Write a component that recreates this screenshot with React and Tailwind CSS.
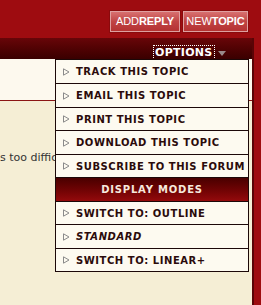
const items = [
  { t: "TRACK THIS TOPIC", h: "h-[24px]" },
  { t: "EMAIL THIS TOPIC", h: "h-[24px]" },
  { t: "PRINT THIS TOPIC", h: "h-[23px]" },
  { t: "DOWNLOAD THIS TOPIC", h: "h-[24px]" },
  { t: "SUBSCRIBE TO THIS FORUM", h: "h-[23px]" },
  { t: "DISPLAY MODES", h: "h-[24px]", header: true },
  { t: "SWITCH TO: OUTLINE", h: "h-[23px]" },
  { t: "STANDARD", h: "h-[24px]", italic: true },
  { t: "SWITCH TO: LINEAR+", h: "h-[23px]" },
];

function Btn({ a, b, w }) {
  return (
    <div
      className={`${w} h-[21px] flex items-center justify-center border border-[#dfa0a0] bg-gradient-to-b from-[#d87070] via-[#c04444] to-[#b53232] text-white text-[11px] tracking-[-0.1px] font-['Liberation_Sans',Arial,sans-serif] shadow-[0_0_0_1px_#8a0a0c]`}
    >
      <span>{a}</span>
      <span className="font-bold">{b}</span>
    </div>
  );
}

function Tri() {
  return (
    <svg width="7" height="8" viewBox="0 0 7 8" className="shrink-0">
      <path d="M0.5 0.8 L6 4 L0.5 7.2 Z" fill="none" stroke="#8a8a8a" strokeWidth="1" />
    </svg>
  );
}

export default function App() {
  return (
    <div className="w-[261px] h-[305px] bg-[#9e0c10] overflow-hidden flex flex-col font-['DejaVu_Sans',Verdana,sans-serif]">
      <div className="h-[38px] shrink-0 flex justify-end items-start pt-[11px] pr-[13px] gap-[3px]">
        <Btn a="ADD" b="REPLY" w="w-[70px]" />
        <Btn a="NEW" b="TOPIC" w="w-[65px]" />
      </div>
      <div className="flex flex-1">
        <div className="relative w-[252px] flex flex-col">
          <div className="h-[21px] shrink-0 bg-gradient-to-b from-[#680609] to-[#3a0000] flex items-start pl-[153px]">
            <span className="mt-[7px] h-[17px] border border-dotted border-white px-[1px] text-white font-bold text-[11px] leading-[13px] tracking-[0.3px]">
              OPTIONS
            </span>
            <svg width="8" height="5" viewBox="0 0 8 5" className="mt-[13px] ml-[3px]">
              <path d="M0 0 L8 0 L4 5 Z" fill="#9a8a8a" />
            </svg>
          </div>
          <div className="h-[42px] shrink-0 bg-[#fdf9ee] border-b border-[#8b1515]" />
          <div className="flex-1 bg-[#f5eed5] pt-[50px]">
            <p className="text-[11px] leading-[13px] text-[#333333] whitespace-nowrap">s too difficult</p>
          </div>
          <div className="absolute top-[21px] left-[55px] w-[194px] z-10 border-t border-x border-[#1c0808] bg-[#fdfaf0]">
            {items.map((it) =>
              it.header ? (
                <div
                  key={it.t}
                  className={`${it.h} border-b border-[#1c0808] bg-gradient-to-b from-[#4a0000] to-[#940a0c] flex items-center justify-center text-[#f6e8dc] font-bold text-[10px] tracking-[0.8px]`}
                >
                  {it.t}
                </div>
              ) : (
                <div
                  key={it.t}
                  className={`${it.h} border-b border-[#1c0808] flex items-center pl-[7px] gap-[6px]`}
                >
                  <Tri />
                  <span
                    className={`text-[#2b0b0b] font-bold text-[10px] tracking-[0.55px] whitespace-nowrap ${it.italic ? "italic" : ""}`}
                  >
                    {it.t}
                  </span>
                </div>
              )
            )}
          </div>
        </div>
        <div className="w-[2px] bg-[#5a0406]" />
        <div className="flex-1" />
      </div>
    </div>
  );
}
